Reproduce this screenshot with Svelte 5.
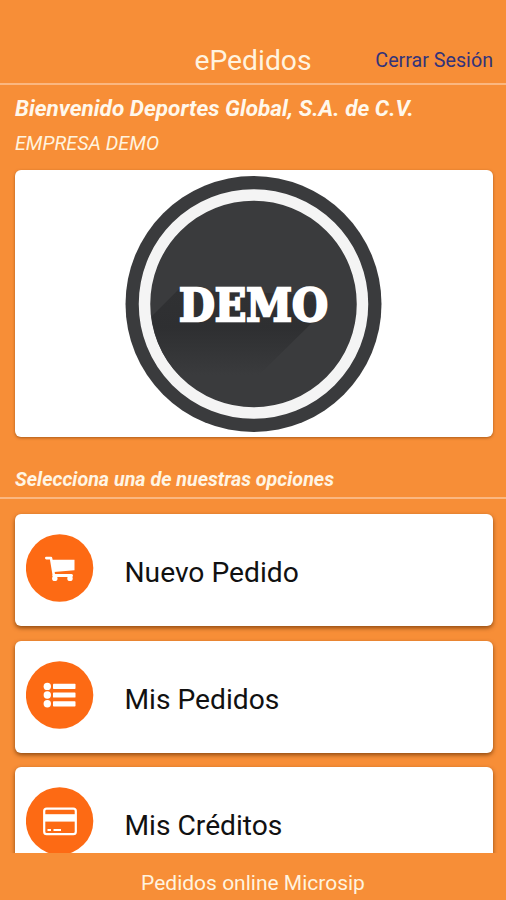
<!--
  ePedidos home screen
-->
<script>
  let { empresa = 'EMPRESA DEMO', cliente = 'Deportes Global, S.A. de C.V.' } = $props();

  const opciones = [
    { icon: 'cart', label: 'Nuevo Pedido' },
    { icon: 'list', label: 'Mis Pedidos' },
    { icon: 'card', label: 'Mis Créditos' }
  ];
</script>

<div class="app">
  <header class="header">
    <span></span>
    <h1 class="title">ePedidos</h1>
    <button class="logout">Cerrar Sesión</button>
  </header>

  <main class="content">
    <h2 class="welcome">Bienvenido {cliente}</h2>
    <p class="company">{empresa}</p>

    <div class="logo">
      <svg width="478" height="267" viewBox="0 0 478 267">
        <defs>
          <linearGradient id="shade" x1="0" y1="0" x2="0" y2="1">
            <stop offset="0" stop-color="#303133" />
            <stop offset="0.45" stop-color="#2e2f31" />
            <stop offset="1" stop-color="#3a3b3d" />
          </linearGradient>
          <clipPath id="disc"><circle cx="238.5" cy="134" r="103" /></clipPath>
        </defs>
        <circle cx="238.5" cy="134" r="128" fill="#3a3b3d" />
        <circle cx="238.5" cy="134" r="109" fill="none" stroke="#f4f4f4" stroke-width="11.5" />
        <path d="M164 119L124 159L150 205L244 205L310 140L300 125Z" fill="url(#shade)" clip-path="url(#disc)" />
        <text class="logo-text" x="164" y="150.5" textLength="149" lengthAdjust="spacingAndGlyphs">DEMO</text>
      </svg>
    </div>

    <h3 class="subtitle">Selecciona una de nuestras opciones</h3>

    <div class="options">
      {#each opciones as opcion}
        <button class="option">
          <svg class="option-icon" width="68" height="68" viewBox="0 0 68 68">
            <circle cx="33.6" cy="34" r="33.7" fill="#fd6a14" />
            {#if opcion.icon === 'cart'}
              <path d="M20.3 24.1H25L28 42" fill="none" stroke="#fff" stroke-width="2.6" stroke-linecap="round" stroke-linejoin="round" />
              <path d="M25.5 25.7H48.5V36.2L28 38Z" fill="#fff" />
              <path d="M28 41.6H45.5" stroke="#fff" stroke-width="3" stroke-linecap="round" />
              <circle cx="28.8" cy="44.4" r="2.7" fill="#fff" />
              <circle cx="44" cy="44.4" r="2.7" fill="#fff" />
            {:else if opcion.icon === 'list'}
              {#each [25.4, 34, 42.8] as y}
                <circle cx="21.3" cy={y} r="3.7" fill="#fff" />
                <rect x="27" y={y - 2.6} width="22.5" height="5.2" rx="0.7" fill="#fff" />
              {/each}
            {:else}
              <rect x="18.2" y="21.6" width="31.6" height="25.6" rx="2.5" fill="none" stroke="#fff" stroke-width="2.2" />
              <rect x="18.5" y="27.2" width="31" height="7.4" fill="#fff" />
              <path d="M21.5 43H25M27.5 43H35" stroke="#fff" stroke-width="2" />
            {/if}
          </svg>
          <span class="option-label">{opcion.label}</span>
        </button>
      {/each}
    </div>
  </main>

  <footer class="footer">Pedidos online Microsip</footer>
</div>

<style>
  :global(body) {
    margin: 0;
  }

  .app {
    display: flex;
    flex-direction: column;
    height: 900px;
    overflow: hidden;
    background: #f78e37;
    color: #fff3df;
    font-family: Roboto, 'Liberation Sans', sans-serif;
  }

  h1,
  h2,
  h3,
  p {
    margin: 0;
  }

  button {
    padding: 0;
    border: none;
    background: none;
    font-family: inherit;
  }

  .header {
    display: grid;
    grid-template-columns: 1fr auto 1fr;
    align-items: end;
    flex-shrink: 0;
    box-sizing: border-box;
    height: 85px;
    padding: 0 13px 6px;
    border-bottom: 2px solid #fbb780;
  }

  .title {
    font-size: 28.3px;
    font-weight: 400;
    line-height: 32px;
  }

  .logout {
    justify-self: end;
    color: #33337a;
    font-size: 19.7px;
    line-height: 32px;
    white-space: nowrap;
  }

  .content {
    flex: 1;
    min-height: 0;
    overflow: hidden;
  }

  .welcome {
    padding: 9px 15px 0;
    color: #fff8ec;
    font-size: 22.55px;
    font-style: italic;
    font-weight: 700;
    line-height: 30px;
    white-space: nowrap;
  }

  .company {
    padding: 7px 15px 0;
    font-size: 19.7px;
    font-style: italic;
    line-height: 25px;
  }

  .logo {
    height: 267px;
    margin: 14px 13px 0 15px;
    overflow: hidden;
    background: #fff;
    border-radius: 6px;
    box-shadow: 0 1px 3px rgba(110, 50, 0, 0.55);
  }

  .logo svg {
    display: block;
  }

  .logo-text {
    fill: #fff;
    stroke: #fff;
    stroke-width: 2.4px;
    font-family: 'DejaVu Serif', serif;
    font-size: 45px;
    font-weight: 700;
  }

  .subtitle {
    padding: 29px 15px 3px;
    border-bottom: 2px solid #fbb780;
    color: #fff5e4;
    font-size: 19.7px;
    font-style: italic;
    font-weight: 700;
    line-height: 28px;
  }

  .options {
    display: flex;
    flex-direction: column;
    gap: 14.5px;
    padding: 15px 13px 0 15px;
  }

  .option {
    display: flex;
    align-items: center;
    flex-shrink: 0;
    height: 112px;
    padding: 0 11px 4px;
    background: #fff;
    border-radius: 6px;
    box-shadow: 0 2px 4px rgba(100, 45, 0, 0.7);
    color: #111;
    text-align: left;
  }

  .option-icon {
    flex-shrink: 0;
  }

  .option-label {
    padding: 10px 0 0 30.5px;
    font-size: 28.2px;
    line-height: 34px;
  }

  .footer {
    flex-shrink: 0;
    box-sizing: border-box;
    height: 47px;
    padding-top: 16px;
    font-size: 21px;
    line-height: 28px;
    text-align: center;
  }
</style>
